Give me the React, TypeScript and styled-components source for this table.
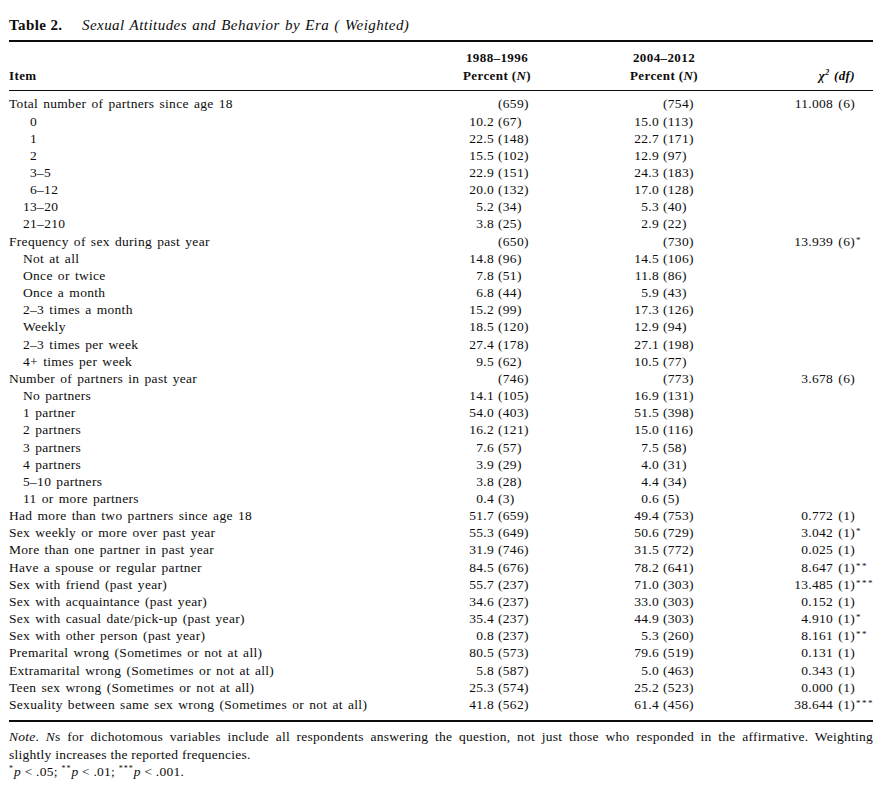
import React from "react";
import styled, { createGlobalStyle } from "styled-components";

const GlobalStyle = createGlobalStyle`
  html, body { margin: 0; padding: 0; background: #ffffff; }
  body {
    font-family: "Liberation Serif", "Times New Roman", serif;
    color: #0d0d0d;
  }
`;

const Page = styled.div`
  width: 864px;
  padding-left: 9px;
`;

const Title = styled.div`
  display: flex;
  align-items: baseline;
  padding-top: 15px;
  height: 20px;
  line-height: 20px;
  font-size: 15px;
  margin-bottom: 5px;
`;

const TitleLabel = styled.span`
  font-weight: bold;
  letter-spacing: 0.4px;
  width: 73px;
`;

const TitleCaption = styled.span`
  font-style: italic;
  letter-spacing: 0.45px;
  word-spacing: 1px;
`;

const Rule = styled.div<{ $thick?: boolean }>`
  height: ${(p) => (p.$thick ? 2 : 1)}px;
  background: #0d0d0d;
`;

const HeaderRow = styled.div`
  display: grid;
  grid-template-columns: 421px 134px 200px 91px 18px;
  padding: 7px 0 6px;
  line-height: 17.5px;
  font-size: 13px;
  font-weight: bold;
  letter-spacing: 0.4px;
`;

const HeaderCell = styled.div<{ $align?: "left" | "center" | "right" }>`
  text-align: ${(p) => p.$align ?? "left"};
  align-self: end;
`;

const Body = styled.div`
  padding: 4.4px 0 6.5px;
`;

const Row = styled.div`
  display: grid;
  grid-template-columns: 440px 45px 126px 39px 101px 95px 18px;
  height: 17.17px;
  line-height: 17.17px;
  font-size: 13.5px;
  letter-spacing: 0.3px;
  word-spacing: 1.5px;
  white-space: nowrap;
`;

const Label = styled.div<{ $indent: number }>`
  padding-left: ${(p) => p.$indent}px;
`;

const Pct = styled.div`
  text-align: right;
`;

const Count = styled.div`
  padding-left: 4px;
`;

const Chi = styled.div`
  text-align: right;
`;

const Stars = styled.div`
  font-size: 9px;
  line-height: 1;
  padding-top: 3px;
  padding-left: 1px;
  letter-spacing: 1.5px;
`;

const Notes = styled.div`
  padding-top: 6.5px;
  font-size: 13.5px;
  line-height: 17.5px;
  letter-spacing: 0.25px;
`;

const NoteLine = styled.div<{ $justify?: boolean }>`
  text-align: ${(p) => (p.$justify ? "justify" : "left")};
  text-align-last: ${(p) => (p.$justify ? "justify" : "left")};
  white-space: nowrap;
`;

const Sup = styled.sup`
  font-size: 8px;
  vertical-align: 5px;
  line-height: 0;
  letter-spacing: 1px;
`;

type RowData = [string, number, string, string, string, string, string, string];

const rows: RowData[] = [
  ["Total number of partners since age 18", 0, "", "(659)", "", "(754)", "11.008 (6)", ""],
  ["0", 21, "10.2", "(67)", "15.0", "(113)", "", ""],
  ["1", 21, "22.5", "(148)", "22.7", "(171)", "", ""],
  ["2", 21, "15.5", "(102)", "12.9", "(97)", "", ""],
  ["3–5", 21, "22.9", "(151)", "24.3", "(183)", "", ""],
  ["6–12", 21, "20.0", "(132)", "17.0", "(128)", "", ""],
  ["13–20", 14, "5.2", "(34)", "5.3", "(40)", "", ""],
  ["21–210", 14, "3.8", "(25)", "2.9", "(22)", "", ""],
  ["Frequency of sex during past year", 0, "", "(650)", "", "(730)", "13.939 (6)", "*"],
  ["Not at all", 14, "14.8", "(96)", "14.5", "(106)", "", ""],
  ["Once or twice", 14, "7.8", "(51)", "11.8", "(86)", "", ""],
  ["Once a month", 14, "6.8", "(44)", "5.9", "(43)", "", ""],
  ["2–3 times a month", 14, "15.2", "(99)", "17.3", "(126)", "", ""],
  ["Weekly", 14, "18.5", "(120)", "12.9", "(94)", "", ""],
  ["2–3 times per week", 14, "27.4", "(178)", "27.1", "(198)", "", ""],
  ["4+ times per week", 14, "9.5", "(62)", "10.5", "(77)", "", ""],
  ["Number of partners in past year", 0, "", "(746)", "", "(773)", "3.678 (6)", ""],
  ["No partners", 14, "14.1", "(105)", "16.9", "(131)", "", ""],
  ["1 partner", 14, "54.0", "(403)", "51.5", "(398)", "", ""],
  ["2 partners", 14, "16.2", "(121)", "15.0", "(116)", "", ""],
  ["3 partners", 14, "7.6", "(57)", "7.5", "(58)", "", ""],
  ["4 partners", 14, "3.9", "(29)", "4.0", "(31)", "", ""],
  ["5–10 partners", 14, "3.8", "(28)", "4.4", "(34)", "", ""],
  ["11 or more partners", 14, "0.4", "(3)", "0.6", "(5)", "", ""],
  ["Had more than two partners since age 18", 0, "51.7", "(659)", "49.4", "(753)", "0.772 (1)", ""],
  ["Sex weekly or more over past year", 0, "55.3", "(649)", "50.6", "(729)", "3.042 (1)", "*"],
  ["More than one partner in past year", 0, "31.9", "(746)", "31.5", "(772)", "0.025 (1)", ""],
  ["Have a spouse or regular partner", 0, "84.5", "(676)", "78.2", "(641)", "8.647 (1)", "**"],
  ["Sex with friend (past year)", 0, "55.7", "(237)", "71.0", "(303)", "13.485 (1)", "***"],
  ["Sex with acquaintance (past year)", 0, "34.6", "(237)", "33.0", "(303)", "0.152 (1)", ""],
  ["Sex with casual date/pick-up (past year)", 0, "35.4", "(237)", "44.9", "(303)", "4.910 (1)", "*"],
  ["Sex with other person (past year)", 0, "0.8", "(237)", "5.3", "(260)", "8.161 (1)", "**"],
  ["Premarital wrong (Sometimes or not at all)", 0, "80.5", "(573)", "79.6", "(519)", "0.131 (1)", ""],
  ["Extramarital wrong (Sometimes or not at all)", 0, "5.8", "(587)", "5.0", "(463)", "0.343 (1)", ""],
  ["Teen sex wrong (Sometimes or not at all)", 0, "25.3", "(574)", "25.2", "(523)", "0.000 (1)", ""],
  ["Sexuality between same sex wrong (Sometimes or not at all)", 0, "41.8", "(562)", "61.4", "(456)", "38.644 (1)", "***"],
];

export default function App() {
  return (
    <>
      <GlobalStyle />
      <Page>
        <Title>
          <TitleLabel>Table 2.</TitleLabel>
          <TitleCaption>Sexual Attitudes and Behavior by Era ( Weighted)</TitleCaption>
        </Title>
        <Rule $thick />
        <HeaderRow>
          <HeaderCell>Item</HeaderCell>
          <HeaderCell $align="center">
            1988–1996
            <br />
            Percent (<i>N</i>)
          </HeaderCell>
          <HeaderCell $align="center">
            2004–2012
            <br />
            Percent (<i>N</i>)
          </HeaderCell>
          <HeaderCell $align="right">
            <i>
              χ<Sup>2</Sup> (df)
            </i>
          </HeaderCell>
          <HeaderCell />
        </HeaderRow>
        <Rule />
        <Body>
          {rows.map((r, i) => (
            <Row key={i}>
              <Label $indent={r[1]}>{r[0]}</Label>
              <Pct>{r[2]}</Pct>
              <Count>{r[3]}</Count>
              <Pct>{r[4]}</Pct>
              <Count>{r[5]}</Count>
              <Chi>{r[6]}</Chi>
              <Stars>{r[7]}</Stars>
            </Row>
          ))}
        </Body>
        <Rule $thick />
        <Notes>
          <NoteLine $justify>
            <i>Note</i>. <i>N</i>s for dichotomous variables include all respondents answering the
            question, not just those who responded in the affirmative. Weighting
          </NoteLine>
          <NoteLine>slightly increases the reported frequencies.</NoteLine>
          <NoteLine>
            <Sup>*</Sup>
            <i>p</i> &lt; .05; <Sup>**</Sup>
            <i>p</i> &lt; .01; <Sup>***</Sup>
            <i>p</i> &lt; .001.
          </NoteLine>
        </Notes>
      </Page>
    </>
  );
}
